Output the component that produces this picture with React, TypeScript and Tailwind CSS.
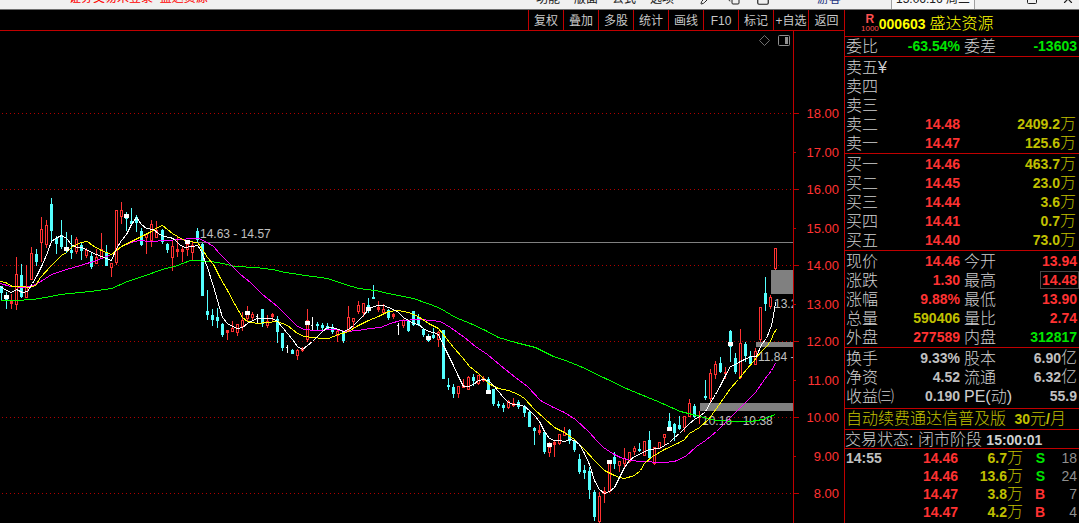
import { Copy, Minus, Pencil, Square, X } from "lucide-react"
import type { ReactNode } from "react"

const tools = ["复权", "叠加", "多股", "统计", "画线", "F10", "标记", "+自选", "返回"]
const menus = ["功能", "版面", "公式", "选项"]

// kind, x, high, body top, body bottom, low
type Candle = ["u" | "d" | "w", number, number, number, number, number]

const candles: Candle[] = [
  ["d", 1, 286, 286, 292, 299],
  ["d", 6, 292, 295, 299, 308],
  ["u", 11, 294, 301, 303, 308],
  ["u", 16, 257, 274, 304, 309],
  ["d", 21, 264, 275, 296, 297],
  ["u", 26, 265, 287, 297, 297],
  ["u", 31, 247, 253, 279, 279],
  ["d", 36, 249, 254, 261, 265],
  ["u", 41, 217, 229, 242, 261],
  ["u", 46, 220, 225, 244, 247],
  ["d", 51, 198, 204, 230, 240],
  ["d", 56, 236, 238, 243, 253],
  ["d", 61, 220, 235, 246, 248],
  ["d", 66, 232, 247, 250, 252],
  ["d", 71, 235, 250, 252, 258],
  ["u", 76, 237, 239, 251, 253],
  ["d", 81, 243, 245, 250, 259],
  ["u", 86, 248, 250, 255, 257],
  ["d", 91, 253, 256, 266, 268],
  ["u", 96, 249, 257, 263, 263],
  ["u", 101, 233, 249, 258, 258],
  ["d", 106, 245, 252, 265, 265],
  ["u", 111, 263, 263, 267, 276],
  ["u", 116, 210, 210, 262, 264],
  ["u", 121, 202, 210, 216, 223],
  ["d", 126, 212, 214, 218, 230],
  ["d", 131, 208, 221, 223, 224],
  ["d", 136, 215, 217, 222, 231],
  ["d", 141, 228, 231, 244, 245],
  ["u", 146, 233, 234, 237, 253],
  ["u", 151, 220, 224, 240, 246],
  ["u", 156, 221, 230, 237, 237],
  ["d", 162, 229, 230, 241, 243],
  ["d", 167, 243, 244, 249, 252],
  ["u", 172, 241, 246, 257, 270],
  ["u", 177, 237, 249, 251, 256],
  ["u", 182, 247, 249, 251, 261],
  ["u", 187, 240, 244, 249, 255],
  ["u", 192, 242, 245, 252, 259],
  ["d", 197, 228, 231, 239, 241],
  ["d", 202, 243, 244, 295, 295],
  ["d", 207, 290, 311, 314, 319],
  ["d", 212, 309, 315, 319, 325],
  ["d", 217, 308, 317, 320, 327],
  ["d", 222, 323, 324, 334, 336],
  ["u", 227, 330, 330, 332, 339],
  ["u", 232, 321, 328, 331, 331],
  ["u", 237, 324, 324, 332, 335],
  ["u", 242, 312, 320, 326, 330],
  ["u", 247, 306, 312, 318, 320],
  ["u", 252, 312, 314, 317, 319],
  ["w", 257, 314, 316, 317, 323],
  ["d", 262, 309, 309, 323, 326],
  ["u", 267, 315, 321, 325, 327],
  ["u", 272, 313, 314, 316, 321],
  ["d", 277, 316, 319, 331, 342],
  ["d", 282, 333, 333, 347, 350],
  ["w", 287, 345, 347, 348, 352],
  ["d", 292, 349, 350, 353, 353],
  ["u", 297, 349, 350, 355, 359],
  ["u", 302, 347, 348, 350, 351],
  ["u", 307, 309, 320, 339, 341],
  ["w", 312, 317, 325, 326, 330],
  ["d", 317, 322, 324, 325, 329],
  ["d", 322, 323, 325, 327, 331],
  ["d", 327, 323, 326, 328, 329],
  ["d", 332, 324, 327, 331, 333],
  ["u", 337, 330, 331, 335, 341],
  ["d", 343, 331, 332, 340, 342],
  ["u", 348, 306, 317, 330, 331],
  ["u", 353, 318, 318, 321, 328],
  ["u", 358, 301, 305, 311, 313],
  ["u", 363, 303, 303, 312, 316],
  ["d", 368, 298, 305, 309, 312],
  ["d", 373, 285, 297, 298, 298],
  ["u", 378, 301, 307, 309, 311],
  ["u", 383, 304, 309, 312, 312],
  ["d", 388, 309, 310, 317, 319],
  ["u", 393, 313, 314, 316, 318],
  ["w", 398, 323, 325, 326, 334],
  ["u", 403, 319, 320, 325, 327],
  ["d", 408, 320, 320, 330, 331],
  ["d", 413, 311, 311, 324, 325],
  ["d", 418, 314, 317, 324, 325],
  ["d", 423, 328, 329, 334, 336],
  ["d", 428, 334, 337, 340, 341],
  ["d", 433, 328, 335, 337, 338],
  ["u", 438, 331, 332, 339, 346],
  ["d", 443, 330, 330, 378, 378],
  ["d", 448, 378, 385, 386, 389],
  ["d", 453, 384, 387, 393, 397],
  ["u", 458, 386, 386, 393, 397],
  ["u", 463, 379, 385, 387, 387],
  ["u", 468, 376, 377, 389, 389],
  ["d", 473, 374, 377, 380, 385],
  ["u", 478, 375, 375, 383, 384],
  ["u", 483, 376, 378, 380, 381],
  ["d", 488, 377, 379, 390, 392],
  ["d", 493, 389, 389, 403, 405],
  ["d", 498, 401, 404, 405, 407],
  ["d", 503, 403, 405, 407, 411],
  ["u", 508, 400, 401, 407, 408],
  ["u", 513, 398, 403, 405, 406],
  ["d", 518, 400, 402, 406, 408],
  ["d", 524, 405, 406, 412, 416],
  ["d", 529, 411, 412, 426, 426],
  ["d", 534, 427, 428, 430, 444],
  ["u", 539, 425, 430, 432, 434],
  ["d", 544, 431, 432, 451, 453],
  ["u", 549, 442, 447, 452, 456],
  ["u", 554, 441, 442, 444, 456],
  ["u", 559, 434, 434, 443, 444],
  ["u", 564, 427, 432, 435, 435],
  ["d", 569, 429, 430, 440, 443],
  ["d", 574, 439, 441, 449, 451],
  ["d", 579, 454, 459, 471, 473],
  ["d", 584, 465, 470, 472, 478],
  ["d", 589, 467, 471, 489, 498],
  ["d", 594, 490, 492, 516, 520],
  ["u", 599, 492, 496, 521, 523],
  ["u", 604, 487, 491, 493, 502],
  ["u", 609, 462, 463, 491, 492],
  ["d", 614, 452, 457, 463, 468],
  ["u", 619, 461, 461, 465, 471],
  ["u", 624, 448, 458, 463, 466],
  ["u", 629, 452, 452, 461, 462],
  ["u", 634, 446, 448, 451, 454],
  ["d", 639, 443, 449, 450, 451],
  ["u", 644, 441, 441, 455, 455],
  ["d", 649, 431, 440, 457, 458],
  ["u", 654, 447, 447, 463, 464],
  ["u", 659, 442, 442, 448, 448],
  ["u", 664, 434, 434, 437, 444],
  ["d", 669, 413, 421, 428, 430],
  ["d", 674, 423, 424, 432, 440],
  ["d", 679, 416, 425, 428, 429],
  ["u", 684, 416, 416, 427, 431],
  ["u", 689, 399, 403, 416, 416],
  ["d", 694, 404, 406, 416, 417],
  ["u", 699, 411, 415, 417, 423],
  ["d", 705, 380, 396, 397, 399],
  ["u", 710, 369, 373, 398, 401],
  ["u", 715, 361, 364, 374, 378],
  ["d", 720, 357, 363, 371, 372],
  ["u", 725, 367, 372, 373, 378],
  ["d", 730, 330, 331, 346, 361],
  ["d", 735, 353, 358, 371, 373],
  ["u", 740, 329, 343, 377, 378],
  ["d", 745, 342, 344, 355, 361],
  ["d", 750, 351, 356, 363, 363],
  ["u", 755, 348, 351, 364, 364],
  ["u", 760, 307, 307, 339, 341],
  ["d", 765, 277, 293, 303, 310],
  ["u", 770, 295, 297, 306, 308],
  ["u", 775, 248, 248, 268, 269],
]

const markers = [
  [6, 297], [66, 249], [126, 216], [187, 242], [247, 313], [307, 323], [368, 309],
  [428, 338], [488, 392], [549, 445], [609, 462], [669, 429], [730, 344],
]

const averages = [
  {
    color: "#00ff00",
    points:
      "0,300 15,300 32,299 45,297 60,294 90,291 111,288 127,281 145,275 162,269 177,265 190,260 210,261 222,263 235,266 255,267 272,269 285,272 305,275 327,278 345,284 358,288 375,290 388,293 398,295 413,298 430,304 440,308 455,317 470,323 485,330 498,337 515,342 535,347 553,356 565,360 580,366 605,378 628,389 655,400 680,411 700,416 715,420 735,421 750,421 762,419 775,414",
  },
  {
    color: "#ff00ff",
    points:
      "0,283 10,286 25,287 35,284 42,280 51,274 66,269 80,265 96,260 111,254 121,246 131,242 138,240 150,241 165,240 180,239 192,238 198,238 205,241 213,246 219,253 228,262 240,274 250,282 262,294 277,306 288,317 297,326 304,329 315,330 335,329 345,331 358,330 370,328 380,327 390,323 400,320 420,319 440,321 450,327 464,337 475,346 487,354 500,365 515,377 527,386 540,400 553,407 564,412 575,419 589,432 596,440 603,447 612,453 620,457 630,460 640,461 663,462 674,461 685,456 696,446 705,440 716,431 730,417 745,402 755,392 764,379 771,370 775,363",
  },
  {
    color: "#ffff00",
    points:
      "0,281 5,282 12,286 22,286 28,287 35,285 40,277 51,265 61,255 66,252 71,247 76,244 81,242 87,241 92,245 101,250 106,252 111,254 116,250 121,246 131,241 141,236 151,231 157,227 162,225 167,229 172,233 182,239 187,241 197,242 202,249 207,257 213,264 219,276 227,290 235,305 242,317 247,321 257,323 267,322 277,321 287,325 297,333 304,336 312,337 322,338 328,338 338,334 348,331 358,325 368,320 378,316 388,311 398,310 408,312 418,316 428,323 438,328 446,338 453,347 462,357 469,366 478,373 488,383 498,388 508,390 518,394 524,398 534,409 544,418 554,427 564,432 574,439 584,449 594,460 604,470 614,475 619,477 624,478 634,475 640,470 644,463 652,456 664,449 679,442 684,439 689,433 699,427 708,419 716,408 730,388 738,379 746,369 753,361 760,352 767,345 771,339 773,333 776,329",
  },
  {
    color: "#ffffff",
    points:
      "0,286 6,290 11,292 16,289 22,292 27,291 32,283 37,274 42,264 47,252 51,241 55,238 61,235 66,238 71,244 76,247 81,247 86,249 91,252 96,254 101,256 106,258 111,260 116,248 121,240 126,234 131,224 136,217 141,224 146,228 153,229 158,233 163,236 170,237 174,239 179,244 184,247 192,246 197,245 200,249 207,267 213,286 219,307 222,317 227,323 232,326 237,328 242,327 247,323 252,320 257,318 262,318 272,318 277,321 282,327 287,333 292,339 297,346 302,349 307,345 312,341 317,336 322,331 327,327 332,327 338,329 343,331 348,329 353,325 358,320 363,315 368,309 373,306 378,305 383,305 388,307 393,309 398,312 403,317 408,320 413,323 418,324 423,328 428,331 433,332 438,334 443,345 448,355 453,365 458,376 463,386 468,386 473,384 478,380 483,379 488,380 493,385 498,391 503,397 508,402 513,404 518,404 524,406 529,410 534,415 539,421 544,431 549,438 554,440 559,440 564,441 569,439 574,440 579,444 584,453 589,464 594,480 599,489 604,493 609,491 614,487 619,477 624,467 629,460 634,456 639,454 644,451 649,449 659,448 664,445 669,442 674,437 679,433 684,428 689,423 694,419 699,416 705,411 710,402 715,394 720,385 725,375 730,366 735,364 740,361 746,358 751,356 756,356 761,344 766,338 771,325 773,315 775,302",
  },
]

const prices = [18, 17, 16, 15, 14, 13, 12, 11, 10, 9, 8]

const candleColors = { u: "#ff3232", d: "#54ffff", w: "#ffffff" }

function CandleShape({ candle }: { candle: Candle }) {
  const [kind, x, high, top, bottom, low] = candle
  const color = candleColors[kind]
  return (
    <g fill={color}>
      <rect x={x} y={high} width={1} height={low - high + 1} />
      {kind === "w" && <rect x={x - 1} y={top} width={1} height={1} />}
      {kind !== "w" && <rect x={x - 1} y={top} width={3} height={bottom - top + 1} />}
      {kind === "u" && bottom - top > 2 && (
        <rect x={x} y={top + 1} width={1} height={bottom - top - 1} fill="#000" />
      )}
    </g>
  )
}

function Chart() {
  return (
    <svg
      viewBox="0 31 844 492"
      className="block w-full font-['Liberation_Sans',sans-serif]"
      shapeRendering="crispEdges"
      role="img"
      aria-label="K线图"
    >
      {prices.map((price, i) => {
        const odd = i % 2
        const y = 113 + i * 38 + odd
        return (
          <g key={price}>
            {!odd && <path d={`M2 ${y}.5H793`} stroke="#b00000" strokeDasharray="1 3" />}
            <rect x={794} y={y} width={odd ? 2 : 5} height={1} fill="#c00000" />
            <text x={839} y={y + 5} textAnchor="end" fontSize={13} fill="#ff3232">
              {price}.00
            </text>
          </g>
        )
      })}
      <rect x={793} y={31} width={1} height={492} fill="#c00000" />

      <rect x={198} y={242} width={595} height={1} fill="#808080" />
      <g fill="#808080">
        <rect x={771} y={270} width={22} height={24} />
        <rect x={756} y={342} width={37} height={5} />
        <rect x={700} y={403} width={93} height={8} />
      </g>
      <svg x={0} y={31} width={793} height={492} viewBox="0 31 793 492" fill="#c0c0c0" fontSize={12}>
        <text x={200} y={238}>14.63 - 14.57</text>
        <text x={774} y={308}>13.2</text>
        <text x={758} y={361}>11.84 -</text>
        <text x={702} y={425}>10.16 - 10.38</text>
      </svg>

      {candles.map((candle) => (
        <CandleShape key={candle[1]} candle={candle} />
      ))}
      {averages.map((line) => (
        <polyline
          key={line.color}
          points={line.points}
          fill="none"
          stroke={line.color}
          transform="translate(0.5 0.5)"
        />
      ))}
      {markers.map(([x, y]) => (
        <rect key={x} x={x - 2} y={y - 2} width={5} height={4} fill="#fff" />
      ))}
    </svg>
  )
}

function TitleBar() {
  return (
    <header className="flex h-[10px] items-end overflow-hidden border-b border-[#707070] bg-[#f0f0f0] text-xs leading-5 whitespace-nowrap text-[#202020]">
      <div className="flex-1 pl-[69px] leading-[22px] text-[#ff0000]">证券交易未登录&nbsp; 盛达资源</div>
      <nav className="flex w-[543px] items-center">
        {menus.map((menu) => (
          <a key={menu} href="#" className="w-[38px]">
            {menu}
          </a>
        ))}
        <div className="flex flex-1 items-center gap-4 pl-3">
          <Pencil size={12} />
          <Copy size={12} />
          <Square size={14} />
        </div>
        <a href="#" className="w-[74px] text-[#203080]">游客</a>
        <time className="w-[84px] border-x border-[#a0a0a0] bg-[#f8f8f8] pl-1">15:06:16 周三</time>
        <div className="flex w-[104px] items-center justify-between pr-1 pl-4">
          <Minus size={12} />
          <Square size={12} />
          <X size={14} />
        </div>
      </nav>
    </header>
  )
}

const red = "text-[#ff3232]"
const green = "text-[#00e600]"
const olive = "text-[#c0c000]"
const gray = "text-[#c0c0c0]"

type Pair = [string, string, string]

function Label({ children }: { children: ReactNode }) {
  return (
    <th scope="row" className="p-0 text-left text-base leading-[19px] font-light whitespace-nowrap text-[#d0d0d0]">
      {children}
    </th>
  )
}

// trailing 万 / 亿 is set lighter and larger than the digits
function Amount({ value }: { value: string }) {
  const unit = value.match(/[万亿]$/)?.[0]
  if (!unit) return <>{value}</>
  return (
    <>
      {value.slice(0, -1)}
      <span className="text-base leading-none font-light">{unit}</span>
    </>
  )
}

function PairTable({ rows, className }: { rows: [Pair, Pair][]; className?: string }) {
  return (
    <div className={`border-b border-[#c00000] pr-0.5 pl-px ${className ?? ""}`}>
      <table className="w-full table-fixed border-collapse">
        <colgroup>
          <col className="w-12" />
          <col className="w-[66px]" />
          <col className="w-12" />
          <col />
        </colgroup>
        <tbody>
          {rows.map(([left, right]) => (
            <tr key={left[0]} className="h-[19px]">
              <Label>{left[0]}</Label>
              <td className={`p-0 text-right leading-[19px] ${left[2]}`}>
                <Amount value={left[1]} />
              </td>
              <Label>
                <span className="pl-1">{right[0]}</span>
              </Label>
              <td className={`p-0 text-right leading-[19px] ${right[2]}`}>
                {right[0] === "最高" ? (
                  <span className="-mr-0.5 inline-block border border-[#484848] px-px leading-4">
                    {right[1]}
                  </span>
                ) : (
                  <Amount value={right[1]} />
                )}
              </td>
            </tr>
          ))}
        </tbody>
      </table>
    </div>
  )
}

function BookTable({ rows }: { rows: [string, string, string][] }) {
  return (
    <div className="border-b border-[#c00000] pt-px pr-[3px] pl-px">
      <table className="w-full table-fixed border-collapse">
        <colgroup>
          <col className="w-12" />
          <col className="w-[66px]" />
          <col />
        </colgroup>
        <tbody>
          {rows.map(([label, price, volume]) => (
            <tr key={label} className="h-[19px]">
              <Label>{label}</Label>
              <td className={`p-0 text-right leading-[19px] ${red}`}>{price}</td>
              <td className={`p-0 text-right leading-[19px] ${olive}`}>
                <Amount value={volume} />
              </td>
            </tr>
          ))}
        </tbody>
      </table>
    </div>
  )
}

const sells: [string, string, string][] = [
  ["卖五¥", "", ""],
  ["卖四", "", ""],
  ["卖三", "", ""],
  ["卖二", "14.48", "2409.2万"],
  ["卖一", "14.47", "125.6万"],
]

const buys: [string, string, string][] = [
  ["买一", "14.46", "463.7万"],
  ["买二", "14.45", "23.0万"],
  ["买三", "14.44", "3.6万"],
  ["买四", "14.41", "0.7万"],
  ["买五", "14.40", "73.0万"],
]

const quotes: [Pair, Pair][] = [
  [["现价", "14.46", red], ["今开", "13.94", red]],
  [["涨跌", "1.30", red], ["最高", "14.48", red]],
  [["涨幅", "9.88%", red], ["最低", "13.90", red]],
  [["总量", "590406", olive], ["量比", "2.74", red]],
  [["外盘", "277589", red], ["内盘", "312817", green]],
]

const basics: [Pair, Pair][] = [
  [["换手", "9.33%", gray], ["股本", "6.90亿", gray]],
  [["净资", "4.52", gray], ["流通", "6.32亿", gray]],
  [["收益㈢", "0.190", gray], ["PE(动)", "55.9", gray]],
]

const ticks = [
  ["14:55", "14.46", "6.7万", "S", "18"],
  ["", "14.46", "13.6万", "S", "24"],
  ["", "14.47", "3.8万", "B", "7"],
  ["", "14.47", "4.2万", "B", "4"],
]

function QuotePanel() {
  return (
    <aside className="w-[235px] shrink-0 border-l border-[#c00000] text-sm font-bold">
      <h1 className="flex h-[27px] items-center border-b border-[#c00000] pt-px pl-4 text-[#ffff00]">
        <span className="flex flex-col items-center text-xs leading-[9px] text-[#ff5050]">
          R<small className="text-[8px] font-normal">1000</small>
        </span>
        000603
        <span className="pl-1 text-base font-light">盛达资源</span>
      </h1>
      <PairTable rows={[[["委比", "-63.54%", green], ["委差", "-13603", green]]]} />
      <BookTable rows={sells} />
      <BookTable rows={buys} />
      <PairTable rows={quotes} className="pt-px" />
      <PairTable rows={basics} className="pt-px pb-0.5" />
      <a
        href="#"
        className={`block h-[21px] border-b border-[#c00000] pl-px text-base leading-5 font-light whitespace-nowrap ${olive}`}
      >
        自动续费通达信普及版 <b className="pl-1 text-sm font-bold">30</b>元
        <b className="text-sm font-bold">/</b>月
      </a>
      <p className="h-[19px] border-b border-[#c00000] text-base leading-[18px] font-light whitespace-nowrap text-[#d0d0d0]">
        交易状态: 闭市阶段 <b className="text-sm font-bold">15:00:01</b>
      </p>
      <div className="pr-0.5 pl-px">
        <table className="w-full table-fixed border-collapse">
          <colgroup>
            <col className="w-12" />
            <col className="w-16" />
            <col />
            <col className="w-[22px]" />
            <col className="w-8" />
          </colgroup>
          <tbody>
            {ticks.map(([time, price, volume, side, count], i) => (
              <tr key={i} className="h-[18px] text-right">
                <td className={`p-0 text-left leading-[18px] ${gray}`}>{time}</td>
                <td className={`p-0 leading-[18px] ${red}`}>{price}</td>
                <td className={`p-0 leading-[18px] ${olive}`}>
                  <Amount value={volume} />
                </td>
                <td className={`p-0 leading-[18px] ${side === "S" ? green : red}`}>{side}</td>
                <td className="p-0 leading-[18px] font-normal text-[#909090]">{count}</td>
              </tr>
            ))}
          </tbody>
        </table>
      </div>
    </aside>
  )
}

export default function App() {
  return (
    <div className="min-h-screen overflow-hidden bg-black font-['Liberation_Sans','Noto_Sans_CJK_SC',sans-serif]">
      <TitleBar />
      <div className="flex">
        <main className="min-w-0 flex-1">
          <div className="flex h-[21px] justify-end border-b border-[#c00000]">
            {tools.map((tool) => (
              <button
                key={tool}
                className="w-[35px] border-l border-[#c00000] pt-px text-center text-xs whitespace-nowrap text-[#c8c8c8] last:w-9"
              >
                {tool}
              </button>
            ))}
          </div>
          <div className="relative">
            <Chart />
            <div className="absolute top-1 right-[54px] flex items-center gap-2">
              <button aria-label="标记点">
                <svg width="11" height="11" viewBox="0 0 11 11" className="block">
                  <path d="M5.5 0.5L10.5 5.5L5.5 10.5L0.5 5.5Z" fill="none" stroke="#707070" />
                </svg>
              </button>
              <button aria-label="侧栏">
                <svg width="12" height="11" viewBox="0 0 12 11" className="block">
                  <rect x="0.5" y="0.5" width="11" height="10" rx="1" fill="none" stroke="#909090" />
                  <rect x="7" y="2" width="3" height="7" fill="#909090" />
                </svg>
              </button>
            </div>
          </div>
        </main>
        <QuotePanel />
      </div>
    </div>
  )
}
